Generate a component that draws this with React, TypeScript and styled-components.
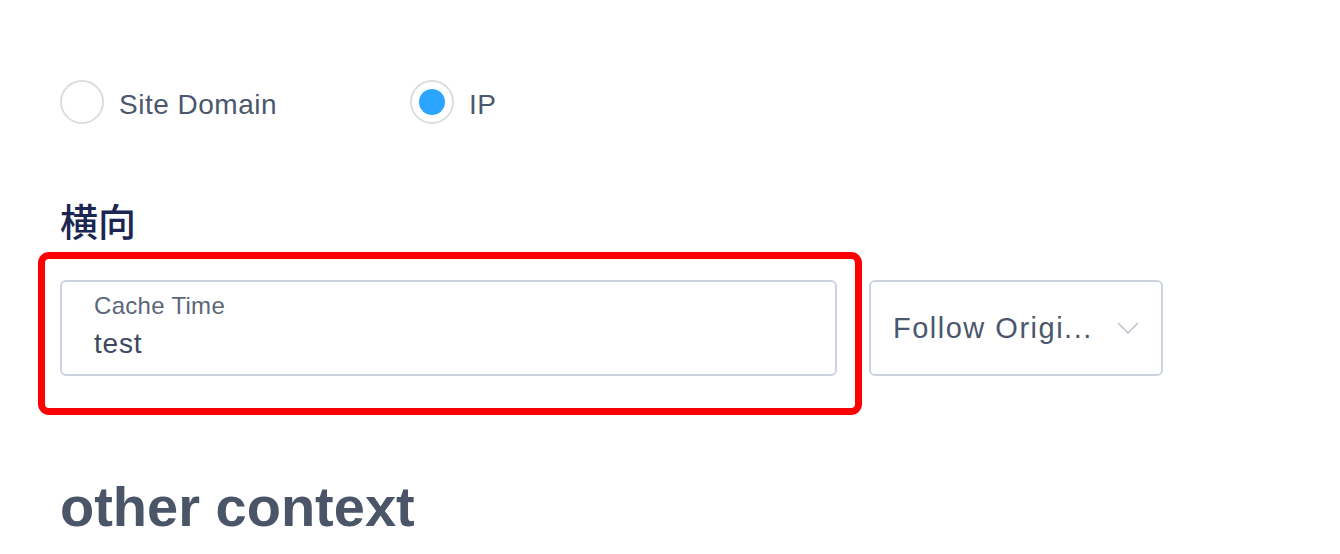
import styled, { createGlobalStyle } from "styled-components";

const GlobalStyle = createGlobalStyle`
  html, body {
    margin: 0;
    padding: 0;
    background: #fff;
  }
  body {
    font-family: "Liberation Sans", Arial, sans-serif;
  }
`;

export const StyledPage = styled.div`
  display: flex;
  flex-direction: column;
  padding: 80px 0 0 38px;
  width: 1340px;
  height: 554px;
  box-sizing: border-box;
  overflow: hidden;
`;

export const StyledRadioGroup = styled.div`
  display: flex;
  align-items: center;
  padding-left: 22px;
`;

export const StyledRadioOption = styled.label`
  display: flex;
  align-items: center;
  gap: 15px;
  width: 350px;
  height: 44px;
  font-size: 28px;
  letter-spacing: 0.5px;
  color: #4b576d;
  cursor: pointer;

  span:last-child {
    padding-top: 6px;
  }
`;

export const StyledRadioCircle = styled.span<{ checked?: boolean }>`
  display: flex;
  justify-content: center;
  align-items: center;
  flex-shrink: 0;
  width: 44px;
  height: 44px;
  box-sizing: border-box;
  border: 2px solid #dcdcdc;
  border-radius: 50%;
  background: #fff;
  &::after {
    content: "";
    display: ${(p) => (p.checked ? "block" : "none")};
    width: 26px;
    height: 26px;
    border-radius: 50%;
    background: #2ba5ff;
  }
`;

export const StyledHeading = styled.h2`
  margin: 71px 0 0 22px;
  font-family: "Noto Sans CJK SC", sans-serif;
  font-weight: 500;
  font-size: 38px;
  line-height: 50px;
  color: #1b2652;
`;

export const StyledFieldRow = styled.div`
  display: flex;
  align-items: flex-start;
  margin-top: 7px;
`;

export const StyledHighlight = styled.div`
  width: 824px;
  box-sizing: border-box;
  border: 7px solid #ff0000;
  border-radius: 11px;
  padding: 21px 18px 32px 15px;
`;

export const StyledInputBox = styled.div`
  display: flex;
  flex-direction: column;
  height: 96px;
  box-sizing: border-box;
  border: 2px solid #cdd3de;
  border-radius: 6px;
  padding: 10px 0 0 32px;
`;

export const StyledInputLabel = styled.span`
  font-size: 24px;
  letter-spacing: 0.3px;
  line-height: 28px;
  color: #5b667b;
`;

export const StyledInputValue = styled.span`
  margin-top: 7px;
  font-size: 28px;
  letter-spacing: 0.8px;
  line-height: 34px;
  color: #3c4862;
`;

export const StyledSelect = styled.div`
  display: flex;
  align-items: center;
  justify-content: space-between;
  width: 294px;
  height: 96px;
  box-sizing: border-box;
  margin: 28px 0 0 7px;
  padding: 0 22px 0 22px;
  border: 2px solid #cdd3de;
  border-radius: 6px;
  font-size: 29px;
  color: #4b576d;
  letter-spacing: 1.5px;
`;

export const StyledOther = styled.h1`
  margin: 62px 0 0 22px;
  font-size: 56px;
  font-weight: 700;
  line-height: 60px;
  color: #4b5568;
`;

function Chevron() {
  return (
    <svg width="22" height="12" viewBox="0 0 22 12" fill="none">
      <path d="M1 1 L11 11 L21 1" stroke="#bcc3ce" strokeWidth="1.6" />
    </svg>
  );
}

function App() {
  return (
    <>
      <GlobalStyle />
      <StyledPage>
        <StyledRadioGroup>
          <StyledRadioOption>
            <StyledRadioCircle />
            <span>Site Domain</span>
          </StyledRadioOption>
          <StyledRadioOption>
            <StyledRadioCircle checked />
            <span>IP</span>
          </StyledRadioOption>
        </StyledRadioGroup>
        <StyledHeading>横向</StyledHeading>
        <StyledFieldRow>
          <StyledHighlight>
            <StyledInputBox>
              <StyledInputLabel>Cache Time</StyledInputLabel>
              <StyledInputValue>test</StyledInputValue>
            </StyledInputBox>
          </StyledHighlight>
          <StyledSelect>
            <span>Follow Origi...</span>
            <Chevron />
          </StyledSelect>
        </StyledFieldRow>
        <StyledOther>other context</StyledOther>
      </StyledPage>
    </>
  );
}

export default App;
